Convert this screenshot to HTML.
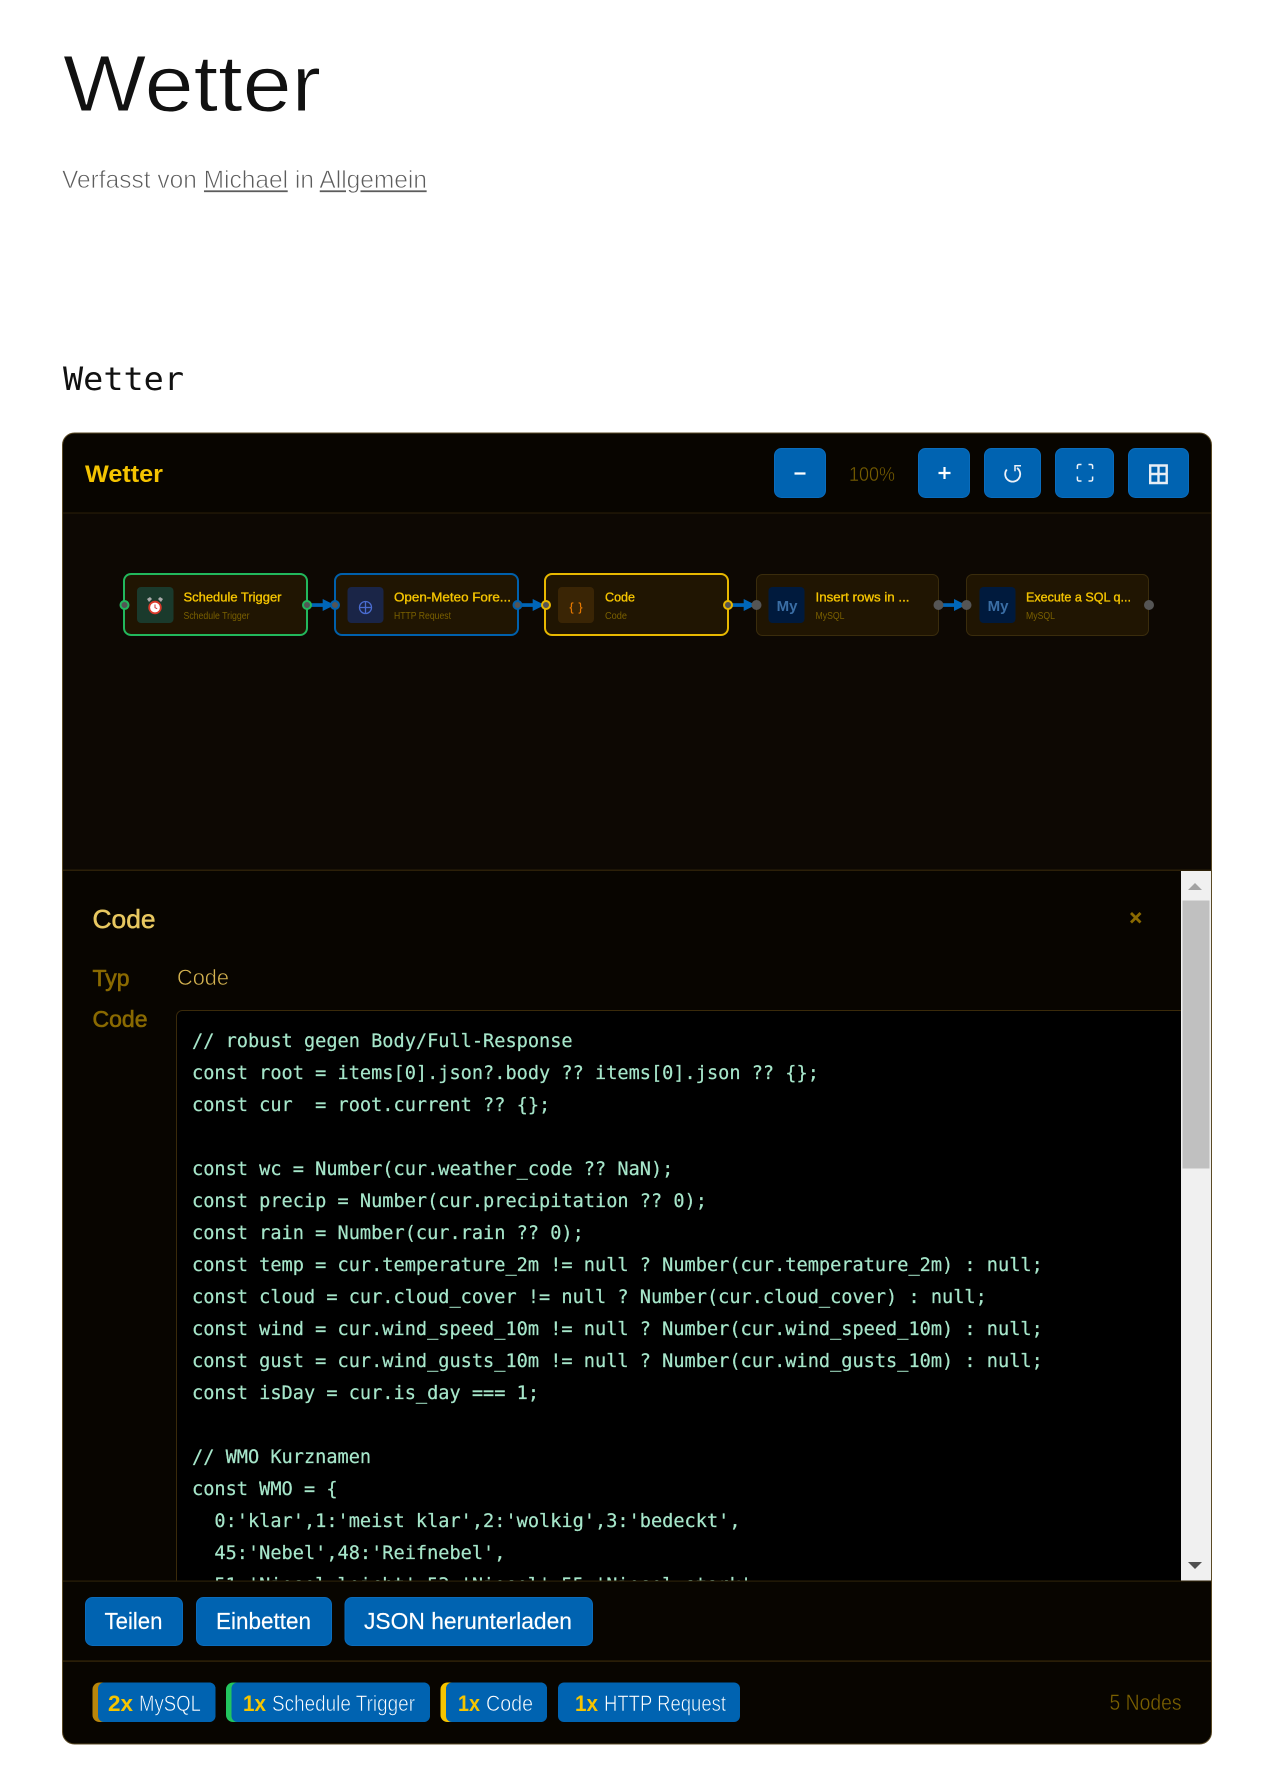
<!DOCTYPE html>
<html lang="de"><head><meta charset="utf-8"><title>Wetter</title>
<style>
html,body{margin:0;padding:0;background:#fff;width:1280px;height:1787px;overflow:hidden}
svg{display:block}
text{font-family:"Liberation Sans",sans-serif;white-space:pre}
.code text{font-family:"DejaVu Sans Mono","Liberation Mono",monospace;font-size:18.6px;fill:#a6e6ca;stroke:#a6e6ca;stroke-width:.2}
.nt{font-size:13px;fill:#f5c400;stroke:#f5c400;stroke-width:.35}
.ns{font-size:10px;fill:#7a6000}
.pill{font-size:22px;fill:#fff;stroke:#0063b1;stroke-width:.6}
.num{font-size:22px;font-weight:700;fill:#f5c400}
.btn{font-size:22.8px;fill:#fff;stroke:#fff;stroke-width:.15}
.b{fill:#0063b1;stroke:#0a6cbc;stroke-width:1}
</style></head><body>
<svg width="1280" height="1787" viewBox="0 0 1280 1787" xmlns="http://www.w3.org/2000/svg">
<defs>
<clipPath id="card"><rect x="62.5" y="433" width="1149" height="1311" rx="12"/></clipPath>
<clipPath id="codeclip"><rect x="62" y="870" width="1119" height="711"/></clipPath>
</defs>

<text x="63" y="111" font-size="80" textLength="258" lengthAdjust="spacingAndGlyphs" fill="#111" stroke="#fff" stroke-width=".9">Wetter</text>
<text x="62" y="188" font-size="25" fill="#5c5c5c" stroke="#fff" stroke-width=".7" textLength="365" lengthAdjust="spacingAndGlyphs">Verfasst von <tspan text-decoration="underline">Michael</tspan> in <tspan text-decoration="underline">Allgemein</tspan></text>
<text x="63" y="390" font-size="32" style="font-family:'DejaVu Sans Mono','Liberation Mono',monospace" fill="#111" textLength="121" lengthAdjust="spacingAndGlyphs">Wetter</text>

<!-- Card -->
<rect x="62.5" y="433" width="1149" height="1311" rx="12" fill="#080500"/>
<g clip-path="url(#card)">
<rect x="62" y="513" width="1150" height="357" fill="#0d0803"/>
<rect x="62" y="512.5" width="1150" height="1" fill="#2c2008"/>
<rect x="62" y="869.5" width="1150" height="1.5" fill="#2c2008"/>

<!-- Detail -->
<rect x="176.5" y="1010.5" width="1020" height="600" rx="6" fill="#000" stroke="#3a2a0a"/>
<g class="code" clip-path="url(#codeclip)">
<text x="192" y="1047">// robust gegen Body/Full-Response</text>
<text x="192" y="1079">const root = items[0].json?.body ?? items[0].json ?? {};</text>
<text x="192" y="1111">const cur  = root.current ?? {};</text>
<text x="192" y="1175">const wc = Number(cur.weather_code ?? NaN);</text>
<text x="192" y="1207">const precip = Number(cur.precipitation ?? 0);</text>
<text x="192" y="1239">const rain = Number(cur.rain ?? 0);</text>
<text x="192" y="1271">const temp = cur.temperature_2m != null ? Number(cur.temperature_2m) : null;</text>
<text x="192" y="1303">const cloud = cur.cloud_cover != null ? Number(cur.cloud_cover) : null;</text>
<text x="192" y="1335">const wind = cur.wind_speed_10m != null ? Number(cur.wind_speed_10m) : null;</text>
<text x="192" y="1367">const gust = cur.wind_gusts_10m != null ? Number(cur.wind_gusts_10m) : null;</text>
<text x="192" y="1399">const isDay = cur.is_day === 1;</text>
<text x="192" y="1463">// WMO Kurznamen</text>
<text x="192" y="1495">const WMO = {</text>
<text x="192" y="1527">  0:'klar',1:'meist klar',2:'wolkig',3:'bedeckt',</text>
<text x="192" y="1559">  45:'Nebel',48:'Reifnebel',</text>
<text x="192" y="1591">  51:'Niesel leicht',53:'Niesel',55:'Niesel stark',</text>
</g>
<text x="92.5" y="928" font-size="26" fill="#e8c860" stroke="#e8c860" stroke-width=".5" textLength="63" lengthAdjust="spacingAndGlyphs">Code</text>
<text x="92.5" y="986" font-size="23" fill="#8a6a00" stroke="#8a6a00" stroke-width=".6" textLength="37" lengthAdjust="spacingAndGlyphs">Typ</text>
<text x="92.5" y="1027" font-size="23" fill="#8a6a00" stroke="#8a6a00" stroke-width=".6" textLength="55" lengthAdjust="spacingAndGlyphs">Code</text>
<text x="177" y="985" font-size="22" fill="#d4b350" stroke="#080500" stroke-width=".55" textLength="52" lengthAdjust="spacingAndGlyphs">Code</text>
<path d="M1131 913l9.500 9.500M1140.500 913l-9.500 9.500" stroke="#8a6a00" stroke-width="2.800" fill="none"/>

<!-- Scrollbar -->
<rect x="1181" y="871" width="30" height="710" fill="#f0f0f0"/>
<rect x="1182.500" y="900.500" width="27" height="268" fill="#c0c0c0"/>
<path d="M1188 890h14l-7-7z" fill="#a3a3a3"/>
<path d="M1188 1562h14l-7 7z" fill="#505050"/>

<!-- Bottom -->
<rect x="62" y="1581" width="1150" height="163" fill="#080500"/>
<rect x="62" y="1580.500" width="1150" height="1.200" fill="#2c2008"/>
<rect x="62" y="1660.500" width="1150" height="1.200" fill="#3a2a0a"/>
<rect class="b" x="85.500" y="1597.500" width="97" height="48" rx="7"/>
<rect class="b" x="196.500" y="1597.500" width="135" height="48" rx="7"/>
<rect class="b" x="345" y="1597.500" width="247.500" height="48" rx="7"/>
<text class="btn" x="104.500" y="1629" textLength="58" lengthAdjust="spacingAndGlyphs">Teilen</text>
<text class="btn" x="216" y="1629" textLength="95" lengthAdjust="spacingAndGlyphs">Einbetten</text>
<text class="btn" x="364" y="1629" textLength="208" lengthAdjust="spacingAndGlyphs">JSON herunterladen</text>

<rect x="92.500" y="1682.500" width="123" height="39.500" rx="7" fill="#b8860b"/>
<rect x="98" y="1682.500" width="117.500" height="39.500" rx="6" fill="#0063b1"/>
<rect x="226" y="1682.500" width="204" height="39.500" rx="7" fill="#22c55e"/>
<rect x="231.500" y="1682.500" width="198.500" height="39.500" rx="6" fill="#0063b1"/>
<rect x="440.500" y="1682.500" width="106.500" height="39.500" rx="7" fill="#f5c400"/>
<rect x="446" y="1682.500" width="101" height="39.500" rx="6" fill="#0063b1"/>
<rect x="558" y="1682.500" width="182" height="39.500" rx="6" fill="#0063b1"/>
<text class="num" x="108" y="1711" textLength="25" lengthAdjust="spacingAndGlyphs">2x</text>
<text class="pill" x="139" y="1711" textLength="62" lengthAdjust="spacingAndGlyphs">MySQL</text>
<text class="num" x="243" y="1711" textLength="23" lengthAdjust="spacingAndGlyphs">1x</text>
<text class="pill" x="272" y="1711" textLength="143" lengthAdjust="spacingAndGlyphs">Schedule Trigger</text>
<text class="num" x="458" y="1711" textLength="22" lengthAdjust="spacingAndGlyphs">1x</text>
<text class="pill" x="486" y="1711" textLength="47" lengthAdjust="spacingAndGlyphs">Code</text>
<text class="num" x="575" y="1711" textLength="23" lengthAdjust="spacingAndGlyphs">1x</text>
<text class="pill" x="604" y="1711" textLength="122" lengthAdjust="spacingAndGlyphs">HTTP Request</text>
<text x="1109.500" y="1710" font-size="22" fill="#7a6000" stroke="#080500" stroke-width=".4" textLength="72" lengthAdjust="spacingAndGlyphs">5 Nodes</text>

<!-- Header -->
<text x="85" y="482" font-size="24" font-weight="700" fill="#f5c400" textLength="78" lengthAdjust="spacingAndGlyphs">Wetter</text>
<rect class="b" x="774.500" y="448.500" width="51" height="49" rx="7"/>
<rect class="b" x="918.500" y="448.500" width="51" height="49" rx="7"/>
<rect class="b" x="984.500" y="448.500" width="56" height="49" rx="7"/>
<rect class="b" x="1055.500" y="448.500" width="58" height="49" rx="7"/>
<rect class="b" x="1128.500" y="448.500" width="60" height="49" rx="7"/>
<text x="849" y="481" font-size="20" fill="#755c00" stroke="#080500" stroke-width=".4" textLength="46" lengthAdjust="spacingAndGlyphs">100%</text>
<path d="M794.500 473.500h11" stroke="#fff" stroke-width="2.200"/>
<path d="M938.500 473h12M944.500 467v12" stroke="#fff" stroke-width="2.200"/>
<path d="M1006.800 469.500A7.500 7.500 0 1 0 1017 468" stroke="#eef2f8" stroke-width="1.800" fill="none"/>
<path d="M1021 465.700h-6v5.500" stroke="#eef2f8" stroke-width="1.500" fill="none"/>
<path d="M1077.400 469v-3a1.500 1.500 0 0 1 1.500-1.500h2.600M1088.500 464.500h2.600a1.500 1.500 0 0 1 1.500 1.500v3M1092.600 476.500v3a1.500 1.500 0 0 1-1.500 1.500h-2.600M1081.500 481h-2.600a1.500 1.500 0 0 1-1.500-1.500v-3" stroke="#eef2f8" stroke-width="1.500" fill="none"/>
<path d="M1150.200 465.500h16.500v17.500h-16.500zM1158.500 465.500v17.500M1150.200 474h16.500" stroke="#e8eef5" stroke-width="2.400" fill="none"/>

<!-- Connectors -->
<g fill="#0066b8">
<rect x="308" y="603.200" width="16" height="3.700"/><path d="M322.700 599l12 6-12 6z"/>
<rect x="518" y="603.200" width="16" height="3.700"/><path d="M532.700 599l12 6-12 6z"/>
<rect x="728" y="603.200" width="16" height="3.700"/><path d="M743.700 599l12 6-12 6z"/>
<rect x="939" y="603.200" width="16" height="3.700"/><path d="M954 599l12 6-12 6z"/>
</g>

<!-- Nodes -->
<g fill="#201502" stroke-width="2">
<rect x="124" y="574" width="183" height="61" rx="7" stroke="#22b85c"/>
<rect x="335" y="574" width="183" height="61" rx="7" stroke="#0060ac"/>
<rect x="545" y="574" width="183" height="61" rx="7" stroke="#e8b800"/>
</g>
<g fill="#201502" stroke="#3a2c0c">
<rect x="756.500" y="574.500" width="182" height="61" rx="6"/>
<rect x="966.500" y="574.500" width="182" height="61" rx="6"/>
</g>
<rect x="137" y="587" width="36.500" height="36" rx="4" fill="#1a3a2c"/>
<rect x="347.500" y="587" width="36" height="36" rx="4" fill="#1a2547"/>
<rect x="558" y="587" width="36" height="36" rx="4" fill="#3a2505"/>
<rect x="768.500" y="587" width="36" height="36" rx="4" fill="#001a3d"/>
<rect x="979.500" y="587" width="36" height="36" rx="4" fill="#001a3d"/>

<!-- alarm -->
<path d="M149 602l3-3-2-2-3 2zM161 602l-3-3 2-2 3 2z" fill="#aaa"/>
<circle cx="155" cy="607.500" r="5.800" fill="#fff" stroke="#d93a2b" stroke-width="1.800"/>
<path d="M155 604.500v3.200l2.200 1" stroke="#c33" stroke-width="1" fill="none"/>
<!-- globe -->
<g stroke="#4a6cd0" stroke-width="1.300" fill="none"><circle cx="365.500" cy="607.500" r="6"/><path d="M359.500 607.500h12M365.500 601.500v12"/></g>
<text x="576" y="611" font-size="12" fill="#e87a00" text-anchor="middle" stroke="#e87a00" stroke-width=".2" textLength="13" lengthAdjust="spacing">{ }</text>
<text x="787" y="611" font-size="15" font-weight="700" fill="#3a6ea5" text-anchor="middle">My</text>
<text x="998" y="611" font-size="15" font-weight="700" fill="#3a6ea5" text-anchor="middle">My</text>

<text class="nt" x="183.500" y="601.500" textLength="98" lengthAdjust="spacingAndGlyphs">Schedule Trigger</text>
<text class="ns" x="183.500" y="619" textLength="66" lengthAdjust="spacingAndGlyphs">Schedule Trigger</text>
<text class="nt" x="394" y="601.500" textLength="117" lengthAdjust="spacingAndGlyphs">Open-Meteo Fore...</text>
<text class="ns" x="394" y="619" textLength="57" lengthAdjust="spacingAndGlyphs">HTTP Request</text>
<text class="nt" x="605" y="601.500" textLength="30" lengthAdjust="spacingAndGlyphs">Code</text>
<text class="ns" x="605" y="619" textLength="22" lengthAdjust="spacingAndGlyphs">Code</text>
<text class="nt" x="815.500" y="601.500" textLength="94" lengthAdjust="spacingAndGlyphs">Insert rows in ...</text>
<text class="ns" x="815.500" y="619" textLength="29" lengthAdjust="spacingAndGlyphs">MySQL</text>
<text class="nt" x="1026" y="601.500" textLength="105" lengthAdjust="spacingAndGlyphs">Execute a SQL q...</text>
<text class="ns" x="1026" y="619" textLength="29" lengthAdjust="spacingAndGlyphs">MySQL</text>

<!-- Ports -->
<g fill="#555" stroke-width="2">
<circle cx="124.500" cy="605" r="4" stroke="#22b85c"/>
<circle cx="307" cy="605" r="4" stroke="#22b85c"/>
<circle cx="335" cy="605" r="4" stroke="#0060ac"/>
<circle cx="517.500" cy="605" r="4" stroke="#0060ac"/>
<circle cx="546" cy="605" r="4" stroke="#e8b800"/>
<circle cx="728" cy="605" r="4" stroke="#e8b800"/>
</g>
<g fill="#555">
<circle cx="756.500" cy="605" r="5"/>
<circle cx="938.500" cy="605" r="5"/>
<circle cx="966.500" cy="605" r="5"/>
<circle cx="1149" cy="605" r="5"/>
</g>
</g>
<rect x="62.500" y="433" width="1149" height="1311" rx="12" fill="none" stroke="#5a4a25"/>
</svg>
</body></html>
